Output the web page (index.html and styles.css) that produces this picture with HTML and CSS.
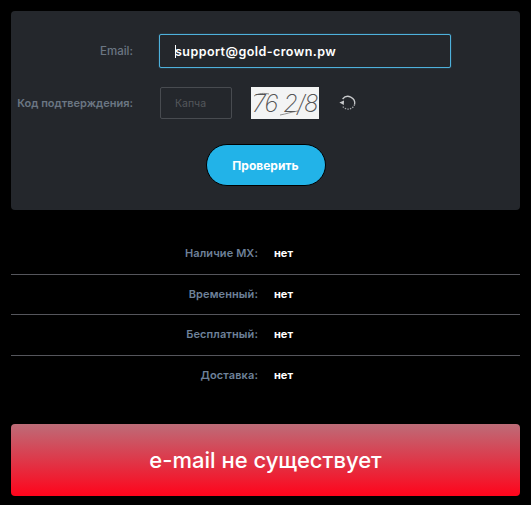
FILE: index.html
```html
<!DOCTYPE html>
<html lang="ru">
<head>
    <meta charset="UTF-8">
    <meta name="viewport" content="width=device-width, initial-scale=1.0">
    <title>Проверка email</title>
    <link rel="stylesheet" href="styles.css">
</head>
<body>
    <form class="panel">
        <div class="row row-email">
            <label class="label">Email:</label>
            <div class="email-input"><span class="caret"></span>support@gold-crown.pw</div>
        </div>
        <div class="row row-captcha">
            <label class="label">Код подтверждения:</label>
            <div class="captcha-input">Капча</div>
            <div class="captcha-img">
                <span class="captcha-text">76 2/8</span>
                <svg class="captcha-noise" width="68" height="32" viewBox="0 0 68 32">
                    <path d="M3 9 C8 6 13 6 18 7" fill="none" stroke="#555" stroke-width="0.7"/>
                    <path d="M29 28 C35 27 40 25 47 24" fill="none" stroke="#666" stroke-width="0.7"/>
                </svg>
            </div>
            <svg class="refresh" width="18" height="18" viewBox="0 0 18 18">
                <path d="M3.6 5 A6.8 6.8 0 0 1 15.6 10.5" fill="none" stroke="#c9cbcd" stroke-width="1.3"/>
                <path d="M15.6 10.5 A6.8 6.8 0 0 1 3.4 12" fill="none" stroke="#a5a8ab" stroke-width="1.3" stroke-dasharray="1.4 1.2"/>
                <path d="M0.4 8.6 L5 6.6 L4.8 11 Z" fill="#c9cbcd"/>
            </svg>
        </div>
        <div class="actions">
            <button type="button" class="btn">Проверить</button>
        </div>
    </form>

    <div class="info">
        <div class="info-row"><span class="info-name">Наличие MX:</span><span class="info-value">нет</span></div>
        <div class="info-row"><span class="info-name">Временный:</span><span class="info-value">нет</span></div>
        <div class="info-row"><span class="info-name">Бесплатный:</span><span class="info-value">нет</span></div>
        <div class="info-row"><span class="info-name">Доставка:</span><span class="info-value">нет</span></div>
    </div>

    <div class="result">e-mail не существует</div>
</body>
</html>
```

FILE: styles.css
```css
* {
    box-sizing: border-box;
}
body {
    margin: 0;
    padding: 11px 11px 0;
    background: #000;
    font-family: "Inter", "Noto Sans", sans-serif;
    overflow: hidden;
}
.panel {
    height: 199px;
    padding-top: 23px;
    background: #24272c;
    border-radius: 4px;
}
.row {
    display: flex;
    align-items: center;
}
.label {
    width: 122px;
    flex: none;
    text-align: right;
    font-size: 11px;
    font-weight: 600;
    color: #6b7683;
    white-space: nowrap;
}
.row-email .label {
    font-size: 11.5px;
    font-weight: 500;
}
.email-input {
    width: 292px;
    height: 34px;
    margin-left: 26px;
    padding-left: 15px;
    display: flex;
    align-items: center;
    border: 1px solid #4eb1dc;
    border-radius: 2px;
    box-shadow: 0 0 1px #4eb1dc;
    font-size: 12.5px;
    font-weight: 600;
    letter-spacing: 0.45px;
    color: #fff;
}
.caret {
    width: 1px;
    height: 13px;
    margin-right: -1px;
    background: #fff;
}
.row-captcha {
    margin-top: 19px;
}
.captcha-input {
    width: 72px;
    height: 32px;
    margin-left: 27px;
    padding-left: 14px;
    display: flex;
    align-items: center;
    border: 1px solid #484b50;
    border-radius: 2px;
    font-size: 10.5px;
    color: #55585c;
}
.captcha-img {
    position: relative;
    width: 68px;
    height: 32px;
    margin-left: 19px;
    background: #f3f4f4;
    overflow: hidden;
    display: flex;
    align-items: center;
    justify-content: center;
}
.captcha-text {
    font-family: "Inter", sans-serif;
    font-style: italic;
    font-weight: 200;
    font-size: 24px;
    letter-spacing: -1px;
    color: #555;
    white-space: nowrap;
}
.captcha-noise {
    position: absolute;
    left: 0;
    top: 0;
}
.refresh {
    margin-left: 20px;
}
.actions {
    margin-top: 25px;
    display: flex;
    justify-content: center;
}
.btn {
    width: 120px;
    height: 42px;
    border: 1px solid #000;
    border-radius: 21px;
    background: #22b3e8;
    color: #fff;
    font-family: inherit;
    font-size: 12px;
    font-weight: 700;
}
.info {
    margin-top: 24px;
}
.info-row {
    height: 40.6px;
    padding-bottom: 1px;
    display: flex;
    align-items: center;
    border-bottom: 1px solid #55565c;
}
.info-row:last-child {
    padding-bottom: 2px;
    border-bottom: none;
}
.info-name {
    width: 247px;
    text-align: right;
    font-size: 11px;
    font-weight: 600;
    letter-spacing: 0.1px;
    color: #6e8199;
}
.info-value {
    margin-left: 16px;
    font-size: 11px;
    font-weight: 700;
    color: #fff;
}
.result {
    height: 72px;
    margin-top: 28px;
    display: flex;
    align-items: center;
    justify-content: center;
    border-radius: 4px;
    background: linear-gradient(#bd6c78, #ff041b);
    color: #fff;
    font-size: 22px;
    font-weight: 500;
}
```
